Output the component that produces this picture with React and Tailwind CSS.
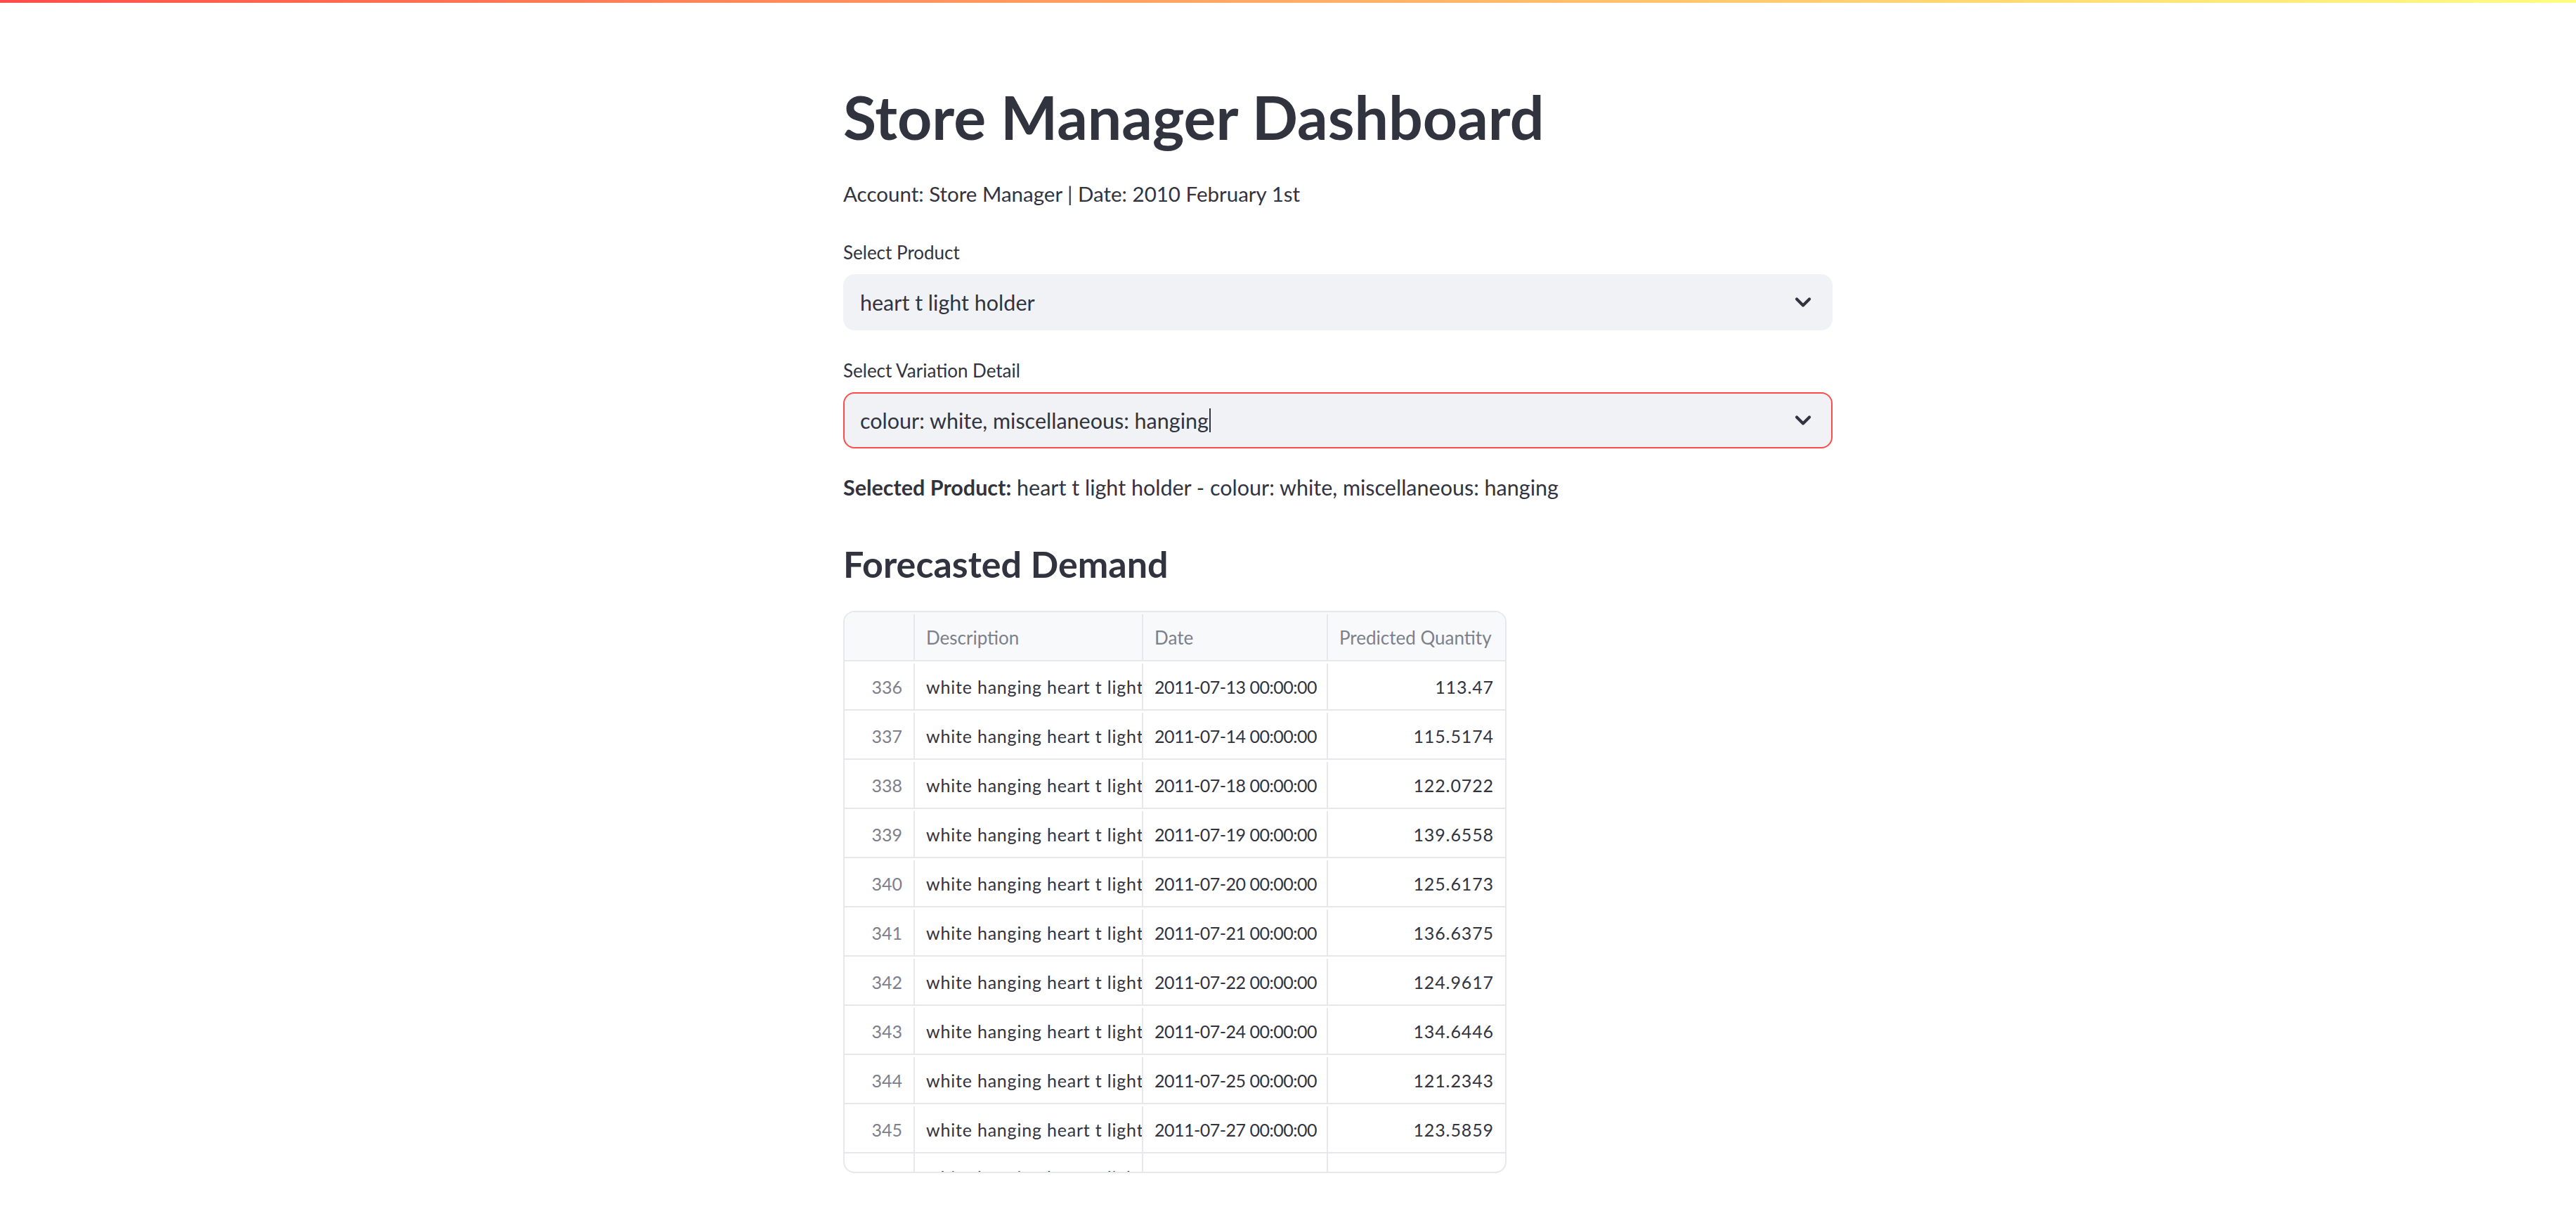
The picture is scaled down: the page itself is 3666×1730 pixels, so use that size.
import { ChevronDown } from 'lucide-react';

const forecastRows = [
  { id: 336, date: "2011-07-13 00:00:00", qty: "113.47" },
  { id: 337, date: "2011-07-14 00:00:00", qty: "115.5174" },
  { id: 338, date: "2011-07-18 00:00:00", qty: "122.0722" },
  { id: 339, date: "2011-07-19 00:00:00", qty: "139.6558" },
  { id: 340, date: "2011-07-20 00:00:00", qty: "125.6173" },
  { id: 341, date: "2011-07-21 00:00:00", qty: "136.6375" },
  { id: 342, date: "2011-07-22 00:00:00", qty: "124.9617" },
  { id: 343, date: "2011-07-24 00:00:00", qty: "134.6446" },
  { id: 344, date: "2011-07-25 00:00:00", qty: "121.2343" },
  { id: 345, date: "2011-07-27 00:00:00", qty: "123.5859" },
  { id: 346, date: "2011-07-28 00:00:00", qty: "118.9021" },
];

function SelectBox({ value, focused }) {
  return (
    <div
      className={`mt-[14px] h-[80px] rounded-[16px] bg-[#f0f2f6] border-2 flex items-center pl-[22px] pr-[22px] ${
        focused ? 'border-[#ff4b4b]' : 'border-transparent'
      }`}
    >
      <span className="text-[30.5px] leading-[40px]">{value}</span>
      {focused && <span className="w-[2px] h-[34px] bg-[#31333f] ml-[1px]"></span>}
      <ChevronDown className="ml-auto w-[36px] h-[36px] text-[#31333f]" strokeWidth={2.8} />
    </div>
  );
}

export default function App() {
  return (
    <div className="min-h-screen bg-white text-[#31333f] font-['Lato','Open_Sans',sans-serif]">
      <div className="h-[4px] bg-gradient-to-r from-[#ff4b4b] to-[#fffd80]"></div>

      <main className="ml-[1200px] w-[1408px] pt-[112px] pb-[60px]">
        <h1 className="text-[86px] leading-[100px] font-bold">Store Manager Dashboard</h1>
        <p className="mt-[40px] text-[29.5px] leading-[40px]">
          Account: Store Manager | Date: 2010 February 1st
        </p>

        <label className="block mt-[46px] text-[26px] leading-[34px]">Select Product</label>
        <SelectBox value="heart t light holder" />

        <label className="block mt-[40px] text-[26px] leading-[34px]">Select Variation Detail</label>
        <SelectBox value="colour: white, miscellaneous: hanging" focused />

        <p className="mt-[35px] text-[30.5px] leading-[40px]">
          <span className="font-bold">Selected Product:</span> heart t light holder - colour: white, miscellaneous: hanging
        </p>

        <h3 className="mt-[57px] text-[52px] leading-[64px] font-bold">Forecasted Demand</h3>

        <div className="mt-[35px] w-[944px] h-[800px] border-2 border-[#e6e8ec] rounded-[16px] overflow-hidden text-[25px] leading-[30px]">
          <div className="flex h-[70px] pt-[3px] bg-[#f8f9fb] border-b-2 border-[#e6e8ec] text-[#7d808b] text-[26px]">
            <div className="w-[100px] border-r-2 border-[#e6e8ec]"></div>
            <div className="w-[325px] border-r-2 border-[#e6e8ec] flex items-center px-[16px]">Description</div>
            <div className="w-[263px] border-r-2 border-[#e6e8ec] flex items-center px-[16px]">Date</div>
            <div className="flex-1 flex items-center px-[16px] whitespace-nowrap">Predicted Quantity</div>
          </div>

          {forecastRows.map((row, index) => (
            <div
              key={row.id}
              className={`flex h-[70px] border-b-2 border-[#e6e8ec] ${
                index === forecastRows.length - 1 ? 'pb-[1px]' : 'pt-[3px]'
              }`}
            >
              <div className="w-[100px] border-r-2 border-[#e6e8ec] flex items-center justify-end px-[16px] text-[#7d808b]">
                {row.id}
              </div>
              <div className="w-[325px] border-r-2 border-[#e6e8ec] flex items-center pl-[16px] overflow-hidden whitespace-nowrap tracking-[0.8px]">
                white hanging heart t light
              </div>
              <div className="w-[263px] border-r-2 border-[#e6e8ec] flex items-center px-[16px] whitespace-nowrap tracking-[-0.5px]">
                {row.date}
              </div>
              <div className="flex-1 flex items-center justify-end px-[16px] tracking-[0.9px]">{row.qty}</div>
            </div>
          ))}
        </div>
      </main>
    </div>
  );
}
